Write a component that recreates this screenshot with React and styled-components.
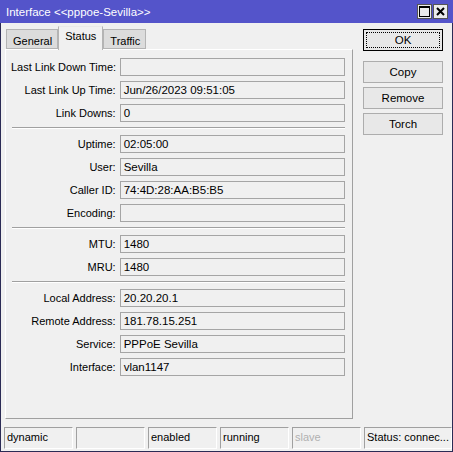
import styled, { createGlobalStyle } from 'styled-components';

const GlobalStyle = createGlobalStyle`
  html, body {
    margin: 0;
    padding: 0;
    background: #f0f0f0;
  }
  body {
    font-family: "Liberation Sans", Arial, sans-serif;
    font-size: 11px;
    color: #000;
  }
`;

const rows = [
  [
    { label: 'Last Link Down Time', value: '' },
    { label: 'Last Link Up Time', value: 'Jun/26/2023 09:51:05' },
    { label: 'Link Downs', value: '0' },
  ],
  [
    { label: 'Uptime', value: '02:05:00' },
    { label: 'User', value: 'Sevilla' },
    { label: 'Caller ID', value: '74:4D:28:AA:B5:B5' },
    { label: 'Encoding', value: '' },
  ],
  [
    { label: 'MTU', value: '1480' },
    { label: 'MRU', value: '1480' },
  ],
  [
    { label: 'Local Address', value: '20.20.20.1' },
    { label: 'Remote Address', value: '181.78.15.251' },
    { label: 'Service', value: 'PPPoE Sevilla' },
    { label: 'Interface', value: 'vlan1147' },
  ],
];

const statusCells = [
  { text: 'dynamic' },
  { text: '' },
  { text: 'enabled' },
  { text: 'running' },
  { text: 'slave', muted: true },
  { text: 'Status: connec...', wide: true },
];

const App = () => {
  return (
    <>
      <GlobalStyle />
      <Window>
        <TitleBar>
          <Title>Interface &lt;&lt;pppoe-Sevilla&gt;&gt;</Title>
          <TitleButtons>
            <TitleButton>
              <svg width="11" height="11" viewBox="0 0 11 11">
                <rect x="0.5" y="0.5" width="10" height="10" fill="none" stroke="#000" />
                <line x1="0" y1="1.5" x2="11" y2="1.5" stroke="#000" />
              </svg>
            </TitleButton>
            <TitleButton>
              <svg width="9" height="9" viewBox="0 0 9 9">
                <path d="M1 1 L8 8 M8 1 L1 8" stroke="#000" strokeWidth="2" />
              </svg>
            </TitleButton>
          </TitleButtons>
        </TitleBar>

        <Body>
          <Main>
            <Tabs>
              <Tab>General</Tab>
              <Tab $active>Status</Tab>
              <Tab>Traffic</Tab>
            </Tabs>
            <Panel>
              {rows.map((group, gi) => (
                <Group key={gi}>
                  {gi > 0 && <Separator />}
                  {group.map((r) => (
                    <Row key={r.label}>
                      <Label>{r.label}:</Label>
                      <Field>{r.value}</Field>
                    </Row>
                  ))}
                </Group>
              ))}
            </Panel>
          </Main>

          <Side>
            <Button $default>OK</Button>
            <ButtonStack>
              <Button>Copy</Button>
              <Button>Remove</Button>
              <Button>Torch</Button>
            </ButtonStack>
          </Side>
        </Body>

        <StatusBar>
          {statusCells.map((c, i) => (
            <StatusCell key={i} $muted={c.muted} $wide={c.wide}>
              {c.text}
            </StatusCell>
          ))}
        </StatusBar>
      </Window>
    </>
  );
};

const Window = styled.div`
  width: 453px;
  height: 452px;
  box-sizing: border-box;
  border: 1px solid #2b2b55;
  border-top: none;
  background: #f0f0f0;
  display: flex;
  flex-direction: column;
`;

const TitleBar = styled.div`
  height: 23px;
  background: #5454ca;
  display: flex;
  align-items: center;
  justify-content: space-between;
  padding: 0 5px 0 6px;
  margin: 0 -1px;
`;

const Title = styled.div`
  color: #fff;
  font-size: 11.5px;
`;

const TitleButtons = styled.div`
  display: flex;
  gap: 1px;
`;

const TitleButton = styled.div`
  width: 15px;
  height: 15px;
  box-sizing: border-box;
  background: #ececec;
  border: 1px solid #555;
  display: flex;
  align-items: center;
  justify-content: center;
`;

const Body = styled.div`
  flex: 1;
  display: flex;
  padding: 3px 0 0 4px;
`;

const Main = styled.div`
  width: 348px;
  display: flex;
  flex-direction: column;
`;

const Tabs = styled.div`
  display: flex;
  align-items: flex-end;
  height: 23px;
  padding-left: 1px;
  position: relative;
  z-index: 1;
`;

const Tab = styled.div`
  box-sizing: border-box;
  height: ${(p) => (p.$active ? '24px' : '20px')};
  margin-bottom: ${(p) => (p.$active ? '-1px' : '0')};
  padding: ${(p) => (p.$active ? '3px 6px 0' : '5px 5px 0 6px')};
  background: ${(p) => (p.$active ? '#f0f0f0' : '#dcdcdc')};
  border: 1px solid #b4b4b4;
  border-bottom: ${(p) => (p.$active ? 'none' : '1px solid #b4b4b4')};
  border-top-color: ${(p) => (p.$active ? '#e8e8e8' : '#b4b4b4')};
`;

const Panel = styled.div`
  flex: 1;
  margin-bottom: 8px;
  border: 1px solid #fff;
  border-right-color: #a0a0a0;
  border-bottom-color: #a0a0a0;
  padding: 8px 7px 0 5px;
  display: flex;
  flex-direction: column;
`;

const Group = styled.div`
  display: flex;
  flex-direction: column;
  gap: 5px;
`;

const Separator = styled.div`
  height: 3px;
  margin: 5px 0 0 1px;
  border-top: 1px solid #a0a0a0;
  box-sizing: border-box;
  background: linear-gradient(#fff, #fff) 0 0 / 100% 1px no-repeat;
`;

const Row = styled.div`
  display: flex;
  align-items: center;
  height: 18px;
`;

const Label = styled.div`
  box-sizing: border-box;
  width: 109px;
  text-align: right;
  padding-right: 4px;
  white-space: nowrap;
`;

const Field = styled.div`
  width: 226px;
  height: 18px;
  box-sizing: border-box;
  border: 1px solid #a5a5a5;
  padding: 1px 0 0 3px;
  line-height: 15px;
  font-size: 11.5px;
  background: #f0f0f0;
`;

const Side = styled.div`
  display: flex;
  flex-direction: column;
  padding: 3px 0 0 10px;
  gap: 10px;
`;

const ButtonStack = styled.div`
  display: flex;
  flex-direction: column;
  gap: 4px;
`;

const Button = styled.div`
  width: 80px;
  height: 22px;
  box-sizing: border-box;
  display: flex;
  align-items: center;
  justify-content: center;
  background: #e8e8e8;
  border: 1px solid ${(p) => (p.$default ? '#000' : '#adadad')};
  font-size: 11.5px;
  position: relative;
  ${(p) =>
    p.$default &&
    `
    &::after {
      content: '';
      position: absolute;
      inset: 2px;
      border: 1px dotted #000;
    }
  `}
`;

const StatusBar = styled.div`
  display: flex;
  gap: 3px;
  padding: 0 0 2px 3px;
  height: 22px;
`;

const StatusCell = styled.div`
  width: ${(p) => (p.$wide ? '88px' : '69px')};
  box-sizing: border-box;
  border: 1px solid #fff;
  border-top-color: #a0a0a0;
  border-left-color: #a0a0a0;
  padding: 3px 0 0 2px;
  white-space: nowrap;
  overflow: hidden;
  color: ${(p) => (p.$muted ? '#b0b0b0' : '#000')};
`;

export default App;
